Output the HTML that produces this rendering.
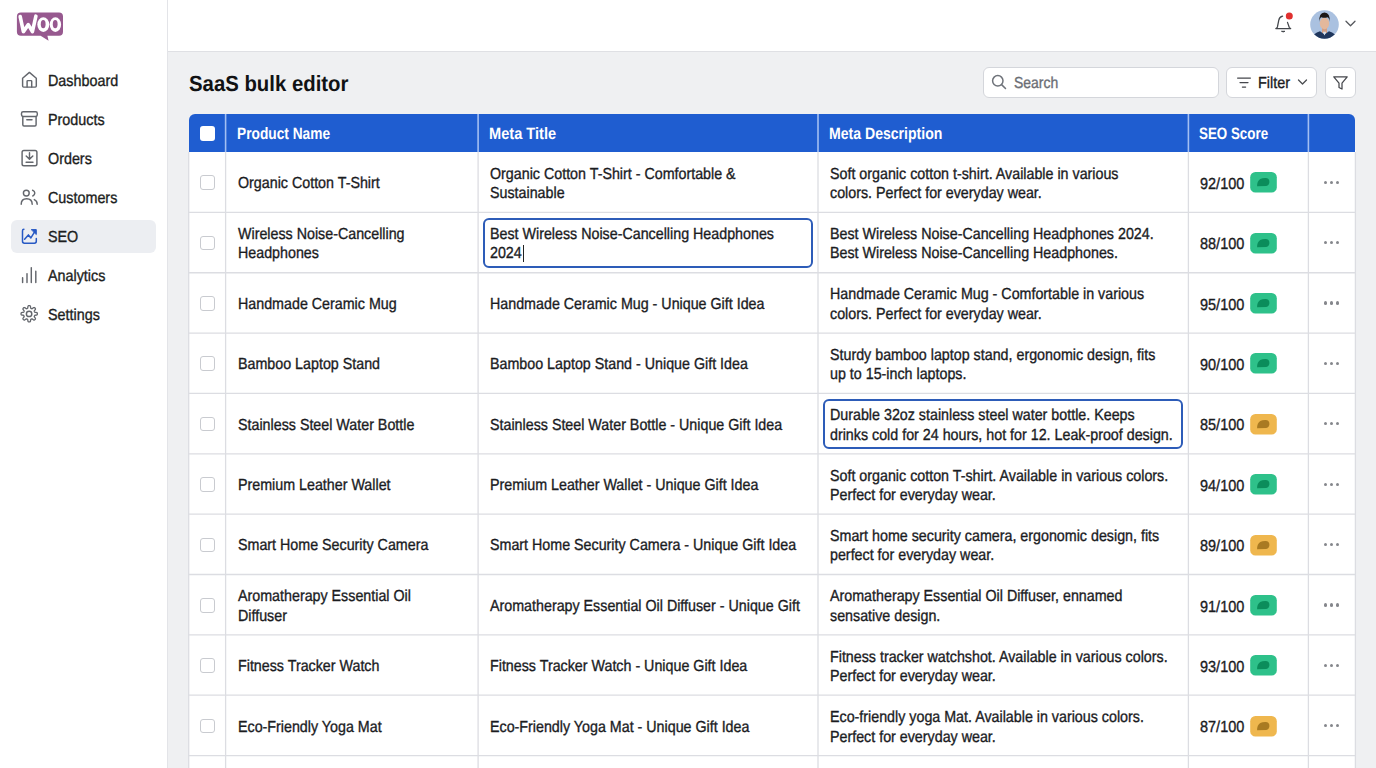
<!DOCTYPE html><html><head><meta charset="utf-8"><style>
*{margin:0;padding:0;box-sizing:border-box}
html,body{width:1376px;height:768px;overflow:hidden;background:#eff0f2;font-family:"Liberation Sans",sans-serif;position:relative;text-rendering:geometricPrecision}
.t{position:absolute;white-space:nowrap;transform-origin:0 0;-webkit-text-stroke:0.35px currentColor}
.a{position:absolute}
</style></head><body>

<div class="a" style="left:0;top:0;width:167px;height:768px;background:#fff"></div>
<div class="a" style="left:167px;top:0;width:1px;height:768px;background:#e3e4e8"></div>
<div class="a" style="left:168px;top:0;width:1208px;height:51px;background:#fff"></div>
<div class="a" style="left:168px;top:51px;width:1208px;height:1px;background:#dfe0e4"></div>
<svg class="a" style="left:0;top:0" width="70" height="45" viewBox="0 0 70 45">
<path d="M21 12.4H59Q63 12.4 63 16.4V31.8Q63 35.8 59 35.8H47.4L48.6 40.8L40.6 35.8H21Q16.9 35.8 16.9 31.8V16.4Q16.9 12.4 21 12.4Z" fill="#97598f"/>
<path d="M20.2 16.6L23.4 31.6L28.3 24.6L32.4 31.6L35.9 16.2" fill="none" stroke="#fff" stroke-width="3.6" stroke-linecap="round" stroke-linejoin="round"/>
<ellipse cx="43.3" cy="24.6" rx="6" ry="7.3" fill="#fff"/><ellipse cx="43.2" cy="24.2" rx="2.4" ry="4.1" fill="#97598f"/>
<ellipse cx="55.4" cy="24.6" rx="5.7" ry="7.3" fill="#fff"/><ellipse cx="55.2" cy="24.2" rx="2.4" ry="4.1" fill="#97598f"/>
</svg>
<div class="a" style="left:11px;top:220px;width:145px;height:33px;background:#eceef2;border-radius:6px"></div>
<svg class="a" style="left:0;top:0" width="167" height="340" viewBox="0 0 167 340" fill="none" stroke="#64676d" stroke-width="1.45" stroke-linecap="round" stroke-linejoin="round">
<path d="M22.6 78.2L29.4 72.4L36.3 78.2V86Q36.3 87.1 35.2 87.1H23.7Q22.6 87.1 22.6 86Z"/>
<path d="M27.1 87V81.3Q27.1 80.6 27.8 80.6H31Q31.7 80.6 31.7 81.3V87"/>
<rect x="21.5" y="111.8" width="15.8" height="4.6" rx="1.6"/>
<path d="M22.8 116.4V124.8Q22.8 126 24 126H34.9Q36.1 126 36.1 124.8V116.4M26.8 119.7H32"/>
<rect x="22.1" y="150.4" width="14.8" height="15.3" rx="1.8"/>
<path d="M29.5 152.8V159M26.2 156L29.5 159.3L32.8 156M26.1 162.3H33"/>
<circle cx="26.3" cy="193.1" r="2.9"/>
<path d="M21.2 204.2Q21.2 198.8 26.6 198.8Q32.2 198.8 32.2 204.2M32.6 190.2Q34.8 191 34.8 193.1Q34.8 195.2 32.8 196M34.3 199.6Q37.2 201 37.2 204.2"/>
<path d="M23.9 229.2Q22.5 229.2 22.5 230.7V241.3Q22.5 243.2 24.4 243.2H34.4Q36.3 243.2 36.3 241.3V238.4" stroke="#2759c4" stroke-width="1.5"/>
<path d="M24.6 239.2L28.4 234.9L30.9 237.9L35.2 230.8" stroke="#2759c4" stroke-width="1.5"/><path d="M31.6 229.6H36.3V234.2Z" fill="#2759c4" stroke="#2759c4" stroke-width="1"/>
<path d="M22.6 277.8V282.6M27 273.6V282.6M31.3 267.6V282.6M35.8 271.2V282.6"/>
<circle cx="29.1" cy="313.9" r="2.7"/>
<path d="M37.35 313.80L37.34 314.12L37.29 314.44L37.15 314.74L36.76 315.00L35.97 315.15L35.17 315.23L34.78 315.37L34.61 315.56L34.51 315.76L34.42 315.96L34.34 316.17L34.27 316.38L34.26 316.63L34.44 317.01L34.94 317.63L35.40 318.30L35.48 318.75L35.37 319.07L35.18 319.33L34.96 319.56L34.73 319.78L34.47 319.97L34.15 320.08L33.70 320.00L33.03 319.54L32.41 319.04L32.03 318.86L31.78 318.87L31.57 318.94L31.36 319.02L31.16 319.11L30.96 319.21L30.77 319.38L30.63 319.77L30.55 320.57L30.40 321.36L30.14 321.75L29.84 321.89L29.52 321.94L29.20 321.95L28.88 321.94L28.56 321.89L28.26 321.75L28.00 321.36L27.85 320.57L27.77 319.77L27.63 319.38L27.44 319.21L27.24 319.11L27.04 319.02L26.83 318.94L26.62 318.87L26.37 318.86L25.99 319.04L25.37 319.54L24.70 320.00L24.25 320.08L23.93 319.97L23.67 319.78L23.44 319.56L23.22 319.33L23.03 319.07L22.92 318.75L23.00 318.30L23.46 317.63L23.96 317.01L24.14 316.63L24.13 316.38L24.06 316.17L23.98 315.96L23.89 315.76L23.79 315.56L23.62 315.37L23.23 315.23L22.43 315.15L21.64 315.00L21.25 314.74L21.11 314.44L21.06 314.12L21.05 313.80L21.06 313.48L21.11 313.16L21.25 312.86L21.64 312.60L22.43 312.45L23.23 312.37L23.62 312.23L23.79 312.04L23.89 311.84L23.98 311.64L24.06 311.43L24.13 311.22L24.14 310.97L23.96 310.59L23.46 309.97L23.00 309.30L22.92 308.85L23.03 308.53L23.22 308.27L23.44 308.04L23.67 307.82L23.93 307.63L24.25 307.52L24.70 307.60L25.37 308.06L25.99 308.56L26.37 308.74L26.62 308.73L26.83 308.66L27.04 308.58L27.24 308.49L27.44 308.39L27.63 308.22L27.77 307.83L27.85 307.03L28.00 306.24L28.26 305.85L28.56 305.71L28.88 305.66L29.20 305.65L29.52 305.66L29.84 305.71L30.14 305.85L30.40 306.24L30.55 307.03L30.63 307.83L30.77 308.22L30.96 308.39L31.16 308.49L31.36 308.58L31.57 308.66L31.78 308.73L32.03 308.74L32.41 308.56L33.03 308.06L33.70 307.60L34.15 307.52L34.47 307.63L34.73 307.82L34.96 308.04L35.18 308.27L35.37 308.53L35.48 308.85L35.40 309.30L34.94 309.97L34.44 310.59L34.26 310.97L34.27 311.22L34.34 311.43L34.42 311.64L34.51 311.84L34.61 312.04L34.78 312.23L35.17 312.37L35.97 312.45L36.76 312.60L37.15 312.86L37.29 313.16L37.34 313.48Z" stroke-width="1.3"/>
</svg>
<div class="t" style="left:48px;top:71.85px;font-size:16px;line-height:20px;font-weight:400;color:#1d1e21;transform:scaleX(0.896);">Dashboard</div>
<div class="t" style="left:48px;top:110.85px;font-size:16px;line-height:20px;font-weight:400;color:#1d1e21;transform:scaleX(0.896);">Products</div>
<div class="t" style="left:48px;top:149.85px;font-size:16px;line-height:20px;font-weight:400;color:#1d1e21;transform:scaleX(0.896);">Orders</div>
<div class="t" style="left:48px;top:188.85px;font-size:16px;line-height:20px;font-weight:400;color:#1d1e21;transform:scaleX(0.896);">Customers</div>
<div class="t" style="left:48px;top:227.85px;font-size:16px;line-height:20px;font-weight:400;color:#1d1e21;transform:scaleX(0.896);">SEO</div>
<div class="t" style="left:48px;top:266.85px;font-size:16px;line-height:20px;font-weight:400;color:#1d1e21;transform:scaleX(0.896);">Analytics</div>
<div class="t" style="left:48px;top:305.85px;font-size:16px;line-height:20px;font-weight:400;color:#1d1e21;transform:scaleX(0.896);">Settings</div>
<div class="t" style="left:189px;top:69.97px;font-size:22px;line-height:28px;font-weight:700;color:#111214;transform:scaleX(0.925);-webkit-text-stroke:0;">SaaS bulk editor</div>
<div class="a" style="left:983px;top:67px;width:236px;height:31px;background:#fff;border:1px solid #d4d6db;border-radius:6px"></div>
<svg class="a" style="left:991px;top:74px" width="16" height="16" viewBox="0 0 16 16"><circle cx="6.8" cy="6.8" r="5.2" fill="none" stroke="#6f737a" stroke-width="1.5"/><path d="M10.6 10.6L14.5 14.5" stroke="#6f737a" stroke-width="1.5" stroke-linecap="round"/></svg>
<div class="t" style="left:1014px;top:74.45px;font-size:16px;line-height:20px;font-weight:400;color:#6b6e75;transform:scaleX(0.872);">Search</div>
<div class="a" style="left:1226px;top:67px;width:91px;height:31px;background:#fff;border:1px solid #d4d6db;border-radius:6px"></div>
<svg class="a" style="left:1236px;top:76px" width="16" height="13" viewBox="0 0 16 13"><path d="M1.6 2H14.4M4 6.5H12M6.4 11H9.6" stroke="#45474c" stroke-width="1.25" stroke-linecap="round"/></svg>
<div class="t" style="left:1258px;top:74.45px;font-size:16px;line-height:20px;font-weight:400;color:#1b1c1f;transform:scaleX(0.9);">Filter</div>
<svg class="a" style="left:1297px;top:78px" width="11" height="8" viewBox="0 0 11 8"><path d="M1.5 2L5.5 6L9.5 2" fill="none" stroke="#4a4c50" stroke-width="1.3" stroke-linecap="round" stroke-linejoin="round"/></svg>
<div class="a" style="left:1325px;top:67px;width:31px;height:31px;background:#fff;border:1px solid #d4d6db;border-radius:6px"></div>
<svg class="a" style="left:1332px;top:75px" width="17" height="16" viewBox="0 0 17 16"><path d="M1.8 1.8H15.2L10 8.2V14L7 12.5V8.2Z" fill="none" stroke="#45474c" stroke-width="1.25" stroke-linejoin="round"/></svg>
<svg class="a" style="left:1272px;top:12px" width="24" height="24" viewBox="0 0 24 24"><path d="M10.6 4.2Q7.4 5 6.8 8.2L5.4 15Q5.1 16.2 3.8 16.5H18.7Q17.6 16.2 17.2 15.2L15.5 10.4" fill="none" stroke="#43464b" stroke-width="1.25" stroke-linecap="round" stroke-linejoin="round"/><path d="M9.5 19.3Q11.2 20.5 12.9 19.3Z" fill="#43464b" stroke="#43464b" stroke-width="1"/><circle cx="17.3" cy="4" r="3.5" fill="#e0302f"/></svg>
<svg class="a" style="left:1310px;top:9.5px" width="30" height="30" viewBox="0 0 30 30"><defs><clipPath id="av"><circle cx="14.5" cy="14.5" r="14.3"/></clipPath></defs>
<g clip-path="url(#av)"><rect width="30" height="30" fill="#aac1e0"/>
<path d="M12 16H17V23H12Z" fill="#d4a085"/>
<path d="M0.5 31Q2 23.5 10 21.2L14.5 24.5L19 21.2Q27 23.5 28.5 31Z" fill="#1f365c"/>
<path d="M12.8 21.8L14.5 25.5L16.2 21.8Z" fill="#d9dee6"/>
<ellipse cx="14.5" cy="13.3" rx="4.7" ry="5.9" fill="#e3b89c"/>
<path d="M9.4 12Q8.6 2.8 14.5 2.6Q20.4 2.8 19.6 12Q19.3 7.6 17.5 7.2Q14.5 8.2 11.3 7.2Q9.7 7.8 9.4 12Z" fill="#1d1816"/>
</g></svg>
<svg class="a" style="left:1344px;top:19px" width="13" height="9" viewBox="0 0 13 9"><path d="M2 2.3L6.5 6.8L11 2.3" fill="none" stroke="#55585d" stroke-width="1.3" stroke-linecap="round" stroke-linejoin="round"/></svg>
<div class="a" style="left:188.5px;top:150px;width:1167px;height:620px;background:#fff"></div>
<div class="a" style="left:189px;top:114px;width:1166.2px;height:38px;background:#1f5dd0;border-radius:6px 6px 0 0"></div>
<svg class="a" style="left:0;top:0" width="1376" height="768" viewBox="0 0 1376 768"><line x1="225.6" y1="114" x2="225.6" y2="152" stroke="#a3bff2" stroke-width="1.6"/><line x1="225.6" y1="152" x2="225.6" y2="768" stroke="#dcdde2" stroke-width="1.3"/><line x1="478.1" y1="114" x2="478.1" y2="152" stroke="#a3bff2" stroke-width="1.6"/><line x1="478.1" y1="152" x2="478.1" y2="768" stroke="#dcdde2" stroke-width="1.3"/><line x1="818.0" y1="114" x2="818.0" y2="152" stroke="#a3bff2" stroke-width="1.6"/><line x1="818.0" y1="152" x2="818.0" y2="768" stroke="#dcdde2" stroke-width="1.3"/><line x1="1188.4" y1="114" x2="1188.4" y2="152" stroke="#a3bff2" stroke-width="1.6"/><line x1="1188.4" y1="152" x2="1188.4" y2="768" stroke="#dcdde2" stroke-width="1.3"/><line x1="1308.4" y1="114" x2="1308.4" y2="152" stroke="#a3bff2" stroke-width="1.6"/><line x1="1308.4" y1="152" x2="1308.4" y2="768" stroke="#dcdde2" stroke-width="1.3"/><line x1="188.7" y1="152" x2="188.7" y2="768" stroke="#dcdde2" stroke-width="1.3"/><line x1="1355.4" y1="152" x2="1355.4" y2="768" stroke="#dcdde2" stroke-width="1.3"/><line x1="188.5" y1="212.40" x2="1355.5" y2="212.40" stroke="#dcdde2" stroke-width="1.3"/><line x1="188.5" y1="272.75" x2="1355.5" y2="272.75" stroke="#dcdde2" stroke-width="1.3"/><line x1="188.5" y1="333.10" x2="1355.5" y2="333.10" stroke="#dcdde2" stroke-width="1.3"/><line x1="188.5" y1="393.45" x2="1355.5" y2="393.45" stroke="#dcdde2" stroke-width="1.3"/><line x1="188.5" y1="453.80" x2="1355.5" y2="453.80" stroke="#dcdde2" stroke-width="1.3"/><line x1="188.5" y1="514.15" x2="1355.5" y2="514.15" stroke="#dcdde2" stroke-width="1.3"/><line x1="188.5" y1="574.50" x2="1355.5" y2="574.50" stroke="#dcdde2" stroke-width="1.3"/><line x1="188.5" y1="634.85" x2="1355.5" y2="634.85" stroke="#dcdde2" stroke-width="1.3"/><line x1="188.5" y1="695.20" x2="1355.5" y2="695.20" stroke="#dcdde2" stroke-width="1.3"/><line x1="188.5" y1="755.55" x2="1355.5" y2="755.55" stroke="#dcdde2" stroke-width="1.3"/></svg>
<div class="a" style="left:200px;top:125.5px;width:15px;height:15px;background:#fff;border-radius:3px"></div>
<div class="t" style="left:236.6px;top:124.18px;font-size:16.5px;line-height:21px;font-weight:700;color:#fff;transform:scaleX(0.832);-webkit-text-stroke:0;">Product Name</div>
<div class="t" style="left:488.6px;top:124.18px;font-size:16.5px;line-height:21px;font-weight:700;color:#fff;transform:scaleX(0.885);-webkit-text-stroke:0;">Meta Title</div>
<div class="t" style="left:828.6px;top:124.18px;font-size:16.5px;line-height:21px;font-weight:700;color:#fff;transform:scaleX(0.853);-webkit-text-stroke:0;">Meta Description</div>
<div class="t" style="left:1199px;top:124.18px;font-size:16.5px;line-height:21px;font-weight:700;color:#fff;transform:scaleX(0.81);-webkit-text-stroke:0;">SEO Score</div>
<div class="a" style="left:200px;top:175.20px;width:14.6px;height:14.6px;border:1.3px solid #c9cbd0;border-radius:3px;background:#fff"></div>
<div class="t" style="left:238px;top:174.05px;font-size:16px;line-height:20px;font-weight:400;color:#1b1c1f;transform:scaleX(0.892);">Organic Cotton T-Shirt</div>
<div class="t" style="left:490px;top:164.55px;font-size:16px;line-height:20px;font-weight:400;color:#1b1c1f;transform:scaleX(0.892);">Organic Cotton T-Shirt - Comfortable &amp;</div>
<div class="t" style="left:490px;top:183.95px;font-size:16px;line-height:20px;font-weight:400;color:#1b1c1f;transform:scaleX(0.892);">Sustainable</div>
<div class="t" style="left:830px;top:164.55px;font-size:16px;line-height:20px;font-weight:400;color:#1b1c1f;transform:scaleX(0.892);">Soft organic cotton t-shirt. Available in various</div>
<div class="t" style="left:830px;top:183.95px;font-size:16px;line-height:20px;font-weight:400;color:#1b1c1f;transform:scaleX(0.892);">colors. Perfect for everyday wear.</div>
<div class="t" style="left:1199.5px;top:174.75px;font-size:16px;line-height:20px;font-weight:400;color:#1b1c1f;transform:scaleX(0.905);">92/100</div>
<svg class="a" style="left:1250px;top:172.20px" width="27" height="21" viewBox="0 0 27 21"><rect x="0.2" y="0" width="26.6" height="20.6" rx="5.2" fill="#2ec18a"/><path d="M7.1 14.3Q7 8.7 10.3 6.9Q12.4 5.9 15.6 6Q19.4 6.3 19.4 9.8Q19.4 13.4 16.2 13.9Z" fill="#0b8d5b"/></svg>
<div class="a" style="left:1324.15px;top:180.55px;width:3.3px;height:3.3px;border-radius:50%;background:#85878c"></div>
<div class="a" style="left:1329.85px;top:180.55px;width:3.3px;height:3.3px;border-radius:50%;background:#85878c"></div>
<div class="a" style="left:1335.55px;top:180.55px;width:3.3px;height:3.3px;border-radius:50%;background:#85878c"></div>
<div class="a" style="left:200px;top:235.60px;width:14.6px;height:14.6px;border:1.3px solid #c9cbd0;border-radius:3px;background:#fff"></div>
<div class="t" style="left:238px;top:224.95px;font-size:16px;line-height:20px;font-weight:400;color:#1b1c1f;transform:scaleX(0.892);">Wireless Noise-Cancelling</div>
<div class="t" style="left:238px;top:244.35px;font-size:16px;line-height:20px;font-weight:400;color:#1b1c1f;transform:scaleX(0.892);">Headphones</div>
<div class="a" style="left:482.8px;top:218.30px;width:330px;height:50px;border:2px solid #2d5cb8;border-radius:6px;background:#fff"></div>
<div class="a" style="left:523px;top:244.60px;width:1px;height:17px;background:#222"></div>
<div class="t" style="left:490px;top:224.95px;font-size:16px;line-height:20px;font-weight:400;color:#1b1c1f;transform:scaleX(0.892);">Best Wireless Noise-Cancelling Headphones</div>
<div class="t" style="left:490px;top:244.35px;font-size:16px;line-height:20px;font-weight:400;color:#1b1c1f;transform:scaleX(0.892);">2024</div>
<div class="t" style="left:830px;top:224.95px;font-size:16px;line-height:20px;font-weight:400;color:#1b1c1f;transform:scaleX(0.892);">Best Wireless Noise-Cancelling Headphones 2024.</div>
<div class="t" style="left:830px;top:244.35px;font-size:16px;line-height:20px;font-weight:400;color:#1b1c1f;transform:scaleX(0.892);">Best Wireless Noise-Cancelling Headphones.</div>
<div class="t" style="left:1199.5px;top:235.15px;font-size:16px;line-height:20px;font-weight:400;color:#1b1c1f;transform:scaleX(0.905);">88/100</div>
<svg class="a" style="left:1250px;top:232.60px" width="27" height="21" viewBox="0 0 27 21"><rect x="0.2" y="0" width="26.6" height="20.6" rx="5.2" fill="#2ec18a"/><path d="M7.1 14.3Q7 8.7 10.3 6.9Q12.4 5.9 15.6 6Q19.4 6.3 19.4 9.8Q19.4 13.4 16.2 13.9Z" fill="#0b8d5b"/></svg>
<div class="a" style="left:1324.15px;top:240.95px;width:3.3px;height:3.3px;border-radius:50%;background:#85878c"></div>
<div class="a" style="left:1329.85px;top:240.95px;width:3.3px;height:3.3px;border-radius:50%;background:#85878c"></div>
<div class="a" style="left:1335.55px;top:240.95px;width:3.3px;height:3.3px;border-radius:50%;background:#85878c"></div>
<div class="a" style="left:200px;top:296.00px;width:14.6px;height:14.6px;border:1.3px solid #c9cbd0;border-radius:3px;background:#fff"></div>
<div class="t" style="left:238px;top:294.85px;font-size:16px;line-height:20px;font-weight:400;color:#1b1c1f;transform:scaleX(0.892);">Handmade Ceramic Mug</div>
<div class="t" style="left:490px;top:294.85px;font-size:16px;line-height:20px;font-weight:400;color:#1b1c1f;transform:scaleX(0.892);">Handmade Ceramic Mug - Unique Gift Idea</div>
<div class="t" style="left:830px;top:285.35px;font-size:16px;line-height:20px;font-weight:400;color:#1b1c1f;transform:scaleX(0.892);">Handmade Ceramic Mug - Comfortable in various</div>
<div class="t" style="left:830px;top:304.75px;font-size:16px;line-height:20px;font-weight:400;color:#1b1c1f;transform:scaleX(0.892);">colors. Perfect for everyday wear.</div>
<div class="t" style="left:1199.5px;top:295.55px;font-size:16px;line-height:20px;font-weight:400;color:#1b1c1f;transform:scaleX(0.905);">95/100</div>
<svg class="a" style="left:1250px;top:293.00px" width="27" height="21" viewBox="0 0 27 21"><rect x="0.2" y="0" width="26.6" height="20.6" rx="5.2" fill="#2ec18a"/><path d="M7.1 14.3Q7 8.7 10.3 6.9Q12.4 5.9 15.6 6Q19.4 6.3 19.4 9.8Q19.4 13.4 16.2 13.9Z" fill="#0b8d5b"/></svg>
<div class="a" style="left:1324.15px;top:301.35px;width:3.3px;height:3.3px;border-radius:50%;background:#85878c"></div>
<div class="a" style="left:1329.85px;top:301.35px;width:3.3px;height:3.3px;border-radius:50%;background:#85878c"></div>
<div class="a" style="left:1335.55px;top:301.35px;width:3.3px;height:3.3px;border-radius:50%;background:#85878c"></div>
<div class="a" style="left:200px;top:356.40px;width:14.6px;height:14.6px;border:1.3px solid #c9cbd0;border-radius:3px;background:#fff"></div>
<div class="t" style="left:238px;top:355.25px;font-size:16px;line-height:20px;font-weight:400;color:#1b1c1f;transform:scaleX(0.892);">Bamboo Laptop Stand</div>
<div class="t" style="left:490px;top:355.25px;font-size:16px;line-height:20px;font-weight:400;color:#1b1c1f;transform:scaleX(0.892);">Bamboo Laptop Stand - Unique Gift Idea</div>
<div class="t" style="left:830px;top:345.75px;font-size:16px;line-height:20px;font-weight:400;color:#1b1c1f;transform:scaleX(0.892);">Sturdy bamboo laptop stand, ergonomic design, fits</div>
<div class="t" style="left:830px;top:365.15px;font-size:16px;line-height:20px;font-weight:400;color:#1b1c1f;transform:scaleX(0.892);">up to 15-inch laptops.</div>
<div class="t" style="left:1199.5px;top:355.95px;font-size:16px;line-height:20px;font-weight:400;color:#1b1c1f;transform:scaleX(0.905);">90/100</div>
<svg class="a" style="left:1250px;top:353.40px" width="27" height="21" viewBox="0 0 27 21"><rect x="0.2" y="0" width="26.6" height="20.6" rx="5.2" fill="#2ec18a"/><path d="M7.1 14.3Q7 8.7 10.3 6.9Q12.4 5.9 15.6 6Q19.4 6.3 19.4 9.8Q19.4 13.4 16.2 13.9Z" fill="#0b8d5b"/></svg>
<div class="a" style="left:1324.15px;top:361.75px;width:3.3px;height:3.3px;border-radius:50%;background:#85878c"></div>
<div class="a" style="left:1329.85px;top:361.75px;width:3.3px;height:3.3px;border-radius:50%;background:#85878c"></div>
<div class="a" style="left:1335.55px;top:361.75px;width:3.3px;height:3.3px;border-radius:50%;background:#85878c"></div>
<div class="a" style="left:200px;top:416.80px;width:14.6px;height:14.6px;border:1.3px solid #c9cbd0;border-radius:3px;background:#fff"></div>
<div class="t" style="left:238px;top:415.65px;font-size:16px;line-height:20px;font-weight:400;color:#1b1c1f;transform:scaleX(0.892);">Stainless Steel Water Bottle</div>
<div class="a" style="left:822.8px;top:399.40px;width:360.5px;height:49.5px;border:2px solid #2d5cb8;border-radius:6px;background:#fff"></div>
<div class="t" style="left:490px;top:415.65px;font-size:16px;line-height:20px;font-weight:400;color:#1b1c1f;transform:scaleX(0.892);">Stainless Steel Water Bottle - Unique Gift Idea</div>
<div class="t" style="left:830px;top:406.15px;font-size:16px;line-height:20px;font-weight:400;color:#1b1c1f;transform:scaleX(0.892);">Durable 32oz stainless steel water bottle. Keeps</div>
<div class="t" style="left:830px;top:425.55px;font-size:16px;line-height:20px;font-weight:400;color:#1b1c1f;transform:scaleX(0.892);">drinks cold for 24 hours, hot for 12. Leak-proof design.</div>
<div class="t" style="left:1199.5px;top:416.35px;font-size:16px;line-height:20px;font-weight:400;color:#1b1c1f;transform:scaleX(0.905);">85/100</div>
<svg class="a" style="left:1250px;top:413.80px" width="27" height="21" viewBox="0 0 27 21"><rect x="0.2" y="0" width="26.6" height="20.6" rx="5.2" fill="#efb74e"/><path d="M7.1 14.3Q7 8.7 10.3 6.9Q12.4 5.9 15.6 6Q19.4 6.3 19.4 9.8Q19.4 13.4 16.2 13.9Z" fill="#a97a22"/></svg>
<div class="a" style="left:1324.15px;top:422.15px;width:3.3px;height:3.3px;border-radius:50%;background:#85878c"></div>
<div class="a" style="left:1329.85px;top:422.15px;width:3.3px;height:3.3px;border-radius:50%;background:#85878c"></div>
<div class="a" style="left:1335.55px;top:422.15px;width:3.3px;height:3.3px;border-radius:50%;background:#85878c"></div>
<div class="a" style="left:200px;top:477.20px;width:14.6px;height:14.6px;border:1.3px solid #c9cbd0;border-radius:3px;background:#fff"></div>
<div class="t" style="left:238px;top:476.05px;font-size:16px;line-height:20px;font-weight:400;color:#1b1c1f;transform:scaleX(0.892);">Premium Leather Wallet</div>
<div class="t" style="left:490px;top:476.05px;font-size:16px;line-height:20px;font-weight:400;color:#1b1c1f;transform:scaleX(0.892);">Premium Leather Wallet - Unique Gift Idea</div>
<div class="t" style="left:830px;top:466.55px;font-size:16px;line-height:20px;font-weight:400;color:#1b1c1f;transform:scaleX(0.892);">Soft organic cotton T-shirt. Available in various colors.</div>
<div class="t" style="left:830px;top:485.95px;font-size:16px;line-height:20px;font-weight:400;color:#1b1c1f;transform:scaleX(0.892);">Perfect for everyday wear.</div>
<div class="t" style="left:1199.5px;top:476.75px;font-size:16px;line-height:20px;font-weight:400;color:#1b1c1f;transform:scaleX(0.905);">94/100</div>
<svg class="a" style="left:1250px;top:474.20px" width="27" height="21" viewBox="0 0 27 21"><rect x="0.2" y="0" width="26.6" height="20.6" rx="5.2" fill="#2ec18a"/><path d="M7.1 14.3Q7 8.7 10.3 6.9Q12.4 5.9 15.6 6Q19.4 6.3 19.4 9.8Q19.4 13.4 16.2 13.9Z" fill="#0b8d5b"/></svg>
<div class="a" style="left:1324.15px;top:482.55px;width:3.3px;height:3.3px;border-radius:50%;background:#85878c"></div>
<div class="a" style="left:1329.85px;top:482.55px;width:3.3px;height:3.3px;border-radius:50%;background:#85878c"></div>
<div class="a" style="left:1335.55px;top:482.55px;width:3.3px;height:3.3px;border-radius:50%;background:#85878c"></div>
<div class="a" style="left:200px;top:537.60px;width:14.6px;height:14.6px;border:1.3px solid #c9cbd0;border-radius:3px;background:#fff"></div>
<div class="t" style="left:238px;top:536.45px;font-size:16px;line-height:20px;font-weight:400;color:#1b1c1f;transform:scaleX(0.892);">Smart Home Security Camera</div>
<div class="t" style="left:490px;top:536.45px;font-size:16px;line-height:20px;font-weight:400;color:#1b1c1f;transform:scaleX(0.892);">Smart Home Security Camera - Unique Gift Idea</div>
<div class="t" style="left:830px;top:526.95px;font-size:16px;line-height:20px;font-weight:400;color:#1b1c1f;transform:scaleX(0.892);">Smart home security camera, ergonomic design, fits</div>
<div class="t" style="left:830px;top:546.35px;font-size:16px;line-height:20px;font-weight:400;color:#1b1c1f;transform:scaleX(0.892);">perfect for everyday wear.</div>
<div class="t" style="left:1199.5px;top:537.15px;font-size:16px;line-height:20px;font-weight:400;color:#1b1c1f;transform:scaleX(0.905);">89/100</div>
<svg class="a" style="left:1250px;top:534.60px" width="27" height="21" viewBox="0 0 27 21"><rect x="0.2" y="0" width="26.6" height="20.6" rx="5.2" fill="#efb74e"/><path d="M7.1 14.3Q7 8.7 10.3 6.9Q12.4 5.9 15.6 6Q19.4 6.3 19.4 9.8Q19.4 13.4 16.2 13.9Z" fill="#a97a22"/></svg>
<div class="a" style="left:1324.15px;top:542.95px;width:3.3px;height:3.3px;border-radius:50%;background:#85878c"></div>
<div class="a" style="left:1329.85px;top:542.95px;width:3.3px;height:3.3px;border-radius:50%;background:#85878c"></div>
<div class="a" style="left:1335.55px;top:542.95px;width:3.3px;height:3.3px;border-radius:50%;background:#85878c"></div>
<div class="a" style="left:200px;top:598.00px;width:14.6px;height:14.6px;border:1.3px solid #c9cbd0;border-radius:3px;background:#fff"></div>
<div class="t" style="left:238px;top:587.35px;font-size:16px;line-height:20px;font-weight:400;color:#1b1c1f;transform:scaleX(0.892);">Aromatherapy Essential Oil</div>
<div class="t" style="left:238px;top:606.75px;font-size:16px;line-height:20px;font-weight:400;color:#1b1c1f;transform:scaleX(0.892);">Diffuser</div>
<div class="t" style="left:490px;top:596.85px;font-size:16px;line-height:20px;font-weight:400;color:#1b1c1f;transform:scaleX(0.892);">Aromatherapy Essential Oil Diffuser - Unique Gift</div>
<div class="t" style="left:830px;top:587.35px;font-size:16px;line-height:20px;font-weight:400;color:#1b1c1f;transform:scaleX(0.892);">Aromatherapy Essential Oil Diffuser, ennamed</div>
<div class="t" style="left:830px;top:606.75px;font-size:16px;line-height:20px;font-weight:400;color:#1b1c1f;transform:scaleX(0.892);">sensative design.</div>
<div class="t" style="left:1199.5px;top:597.55px;font-size:16px;line-height:20px;font-weight:400;color:#1b1c1f;transform:scaleX(0.905);">91/100</div>
<svg class="a" style="left:1250px;top:595.00px" width="27" height="21" viewBox="0 0 27 21"><rect x="0.2" y="0" width="26.6" height="20.6" rx="5.2" fill="#2ec18a"/><path d="M7.1 14.3Q7 8.7 10.3 6.9Q12.4 5.9 15.6 6Q19.4 6.3 19.4 9.8Q19.4 13.4 16.2 13.9Z" fill="#0b8d5b"/></svg>
<div class="a" style="left:1324.15px;top:603.35px;width:3.3px;height:3.3px;border-radius:50%;background:#85878c"></div>
<div class="a" style="left:1329.85px;top:603.35px;width:3.3px;height:3.3px;border-radius:50%;background:#85878c"></div>
<div class="a" style="left:1335.55px;top:603.35px;width:3.3px;height:3.3px;border-radius:50%;background:#85878c"></div>
<div class="a" style="left:200px;top:658.40px;width:14.6px;height:14.6px;border:1.3px solid #c9cbd0;border-radius:3px;background:#fff"></div>
<div class="t" style="left:238px;top:657.25px;font-size:16px;line-height:20px;font-weight:400;color:#1b1c1f;transform:scaleX(0.892);">Fitness Tracker Watch</div>
<div class="t" style="left:490px;top:657.25px;font-size:16px;line-height:20px;font-weight:400;color:#1b1c1f;transform:scaleX(0.892);">Fitness Tracker Watch - Unique Gift Idea</div>
<div class="t" style="left:830px;top:647.75px;font-size:16px;line-height:20px;font-weight:400;color:#1b1c1f;transform:scaleX(0.892);">Fitness tracker watchshot. Available in various colors.</div>
<div class="t" style="left:830px;top:667.15px;font-size:16px;line-height:20px;font-weight:400;color:#1b1c1f;transform:scaleX(0.892);">Perfect for everyday wear.</div>
<div class="t" style="left:1199.5px;top:657.95px;font-size:16px;line-height:20px;font-weight:400;color:#1b1c1f;transform:scaleX(0.905);">93/100</div>
<svg class="a" style="left:1250px;top:655.40px" width="27" height="21" viewBox="0 0 27 21"><rect x="0.2" y="0" width="26.6" height="20.6" rx="5.2" fill="#2ec18a"/><path d="M7.1 14.3Q7 8.7 10.3 6.9Q12.4 5.9 15.6 6Q19.4 6.3 19.4 9.8Q19.4 13.4 16.2 13.9Z" fill="#0b8d5b"/></svg>
<div class="a" style="left:1324.15px;top:663.75px;width:3.3px;height:3.3px;border-radius:50%;background:#85878c"></div>
<div class="a" style="left:1329.85px;top:663.75px;width:3.3px;height:3.3px;border-radius:50%;background:#85878c"></div>
<div class="a" style="left:1335.55px;top:663.75px;width:3.3px;height:3.3px;border-radius:50%;background:#85878c"></div>
<div class="a" style="left:200px;top:718.80px;width:14.6px;height:14.6px;border:1.3px solid #c9cbd0;border-radius:3px;background:#fff"></div>
<div class="t" style="left:238px;top:717.65px;font-size:16px;line-height:20px;font-weight:400;color:#1b1c1f;transform:scaleX(0.892);">Eco-Friendly Yoga Mat</div>
<div class="t" style="left:490px;top:717.65px;font-size:16px;line-height:20px;font-weight:400;color:#1b1c1f;transform:scaleX(0.892);">Eco-Friendly Yoga Mat - Unique Gift Idea</div>
<div class="t" style="left:830px;top:708.15px;font-size:16px;line-height:20px;font-weight:400;color:#1b1c1f;transform:scaleX(0.892);">Eco-friendly yoga Mat. Available in various colors.</div>
<div class="t" style="left:830px;top:727.55px;font-size:16px;line-height:20px;font-weight:400;color:#1b1c1f;transform:scaleX(0.892);">Perfect for everyday wear.</div>
<div class="t" style="left:1199.5px;top:718.35px;font-size:16px;line-height:20px;font-weight:400;color:#1b1c1f;transform:scaleX(0.905);">87/100</div>
<svg class="a" style="left:1250px;top:715.80px" width="27" height="21" viewBox="0 0 27 21"><rect x="0.2" y="0" width="26.6" height="20.6" rx="5.2" fill="#efb74e"/><path d="M7.1 14.3Q7 8.7 10.3 6.9Q12.4 5.9 15.6 6Q19.4 6.3 19.4 9.8Q19.4 13.4 16.2 13.9Z" fill="#a97a22"/></svg>
<div class="a" style="left:1324.15px;top:724.15px;width:3.3px;height:3.3px;border-radius:50%;background:#85878c"></div>
<div class="a" style="left:1329.85px;top:724.15px;width:3.3px;height:3.3px;border-radius:50%;background:#85878c"></div>
<div class="a" style="left:1335.55px;top:724.15px;width:3.3px;height:3.3px;border-radius:50%;background:#85878c"></div>
</body></html>
